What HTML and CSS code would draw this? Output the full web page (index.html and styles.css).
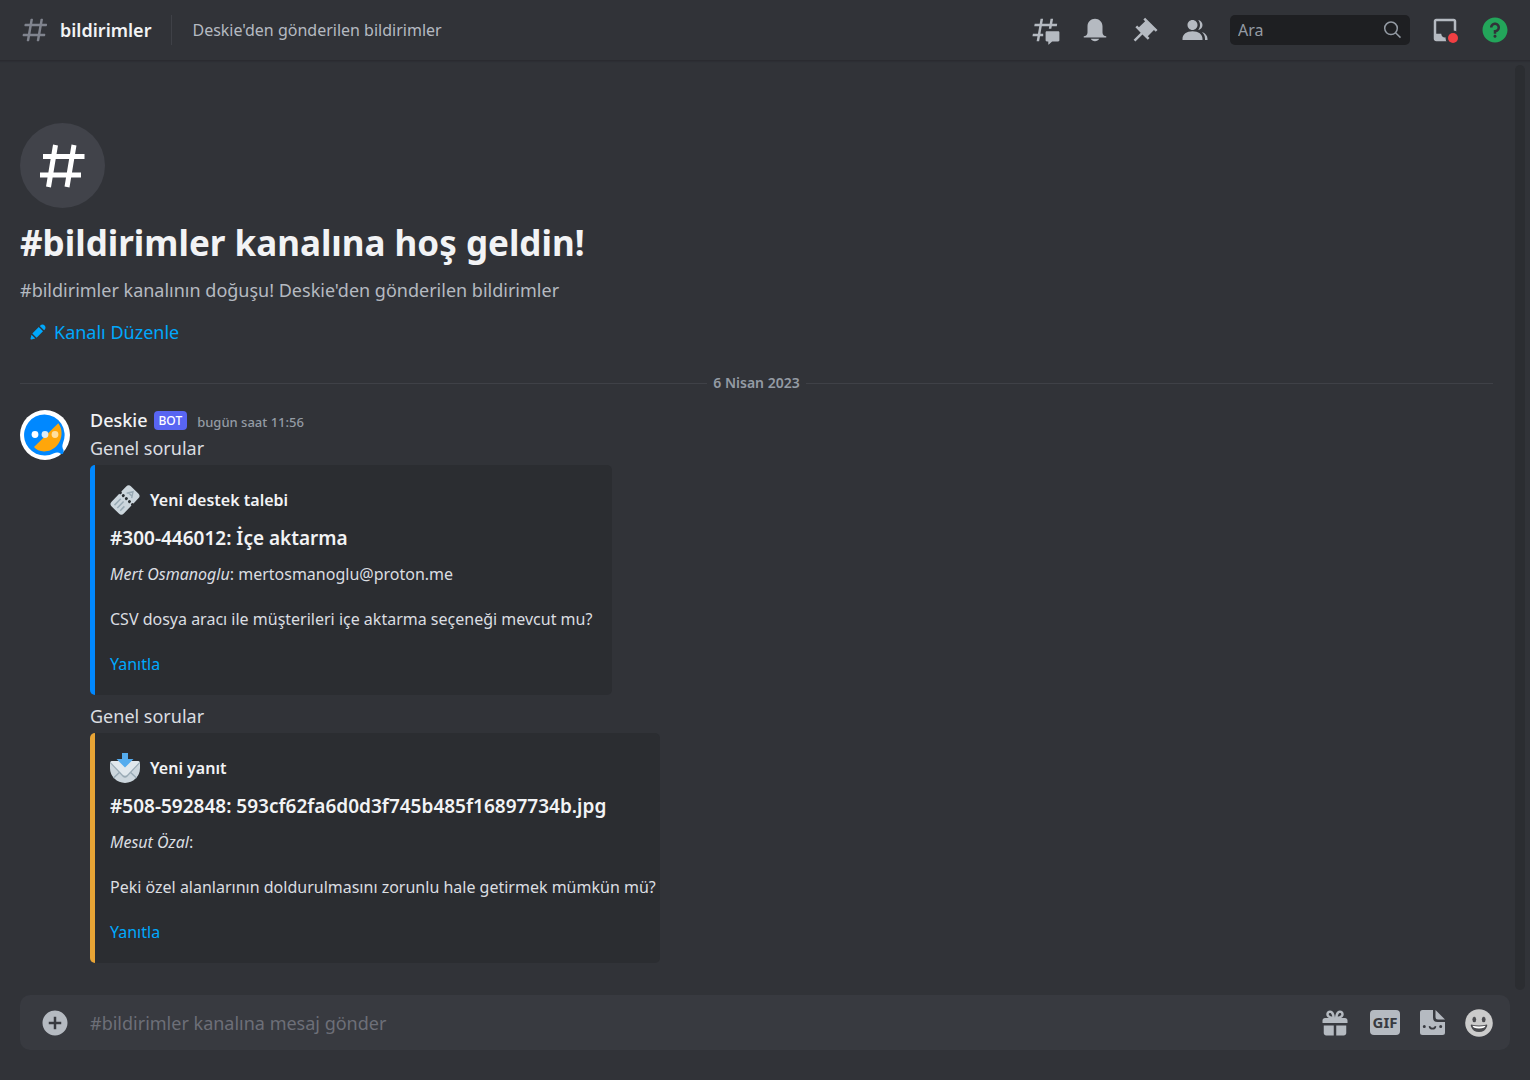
FILE: index.html
```html
<!DOCTYPE html>
<html lang="tr">
<head>
    <meta charset="UTF-8">
    <meta name="viewport" content="width=device-width, initial-scale=1">
    <title>bildirimler</title>
    <link rel="stylesheet" href="styles.css">
</head>
<body>
    <header class="topbar">
        <svg class="icon hash" viewBox="0 0 24 24"><path d="M5.887 21C5.575 21 5.34 20.719 5.394 20.413L6 17H2.595C2.284 17 2.049 16.72 2.103 16.414L2.278 15.414C2.319 15.175 2.527 15 2.77 15H6.35L7.41 9H4.005C3.694 9 3.459 8.72 3.513 8.414L3.688 7.414C3.729 7.175 3.937 7 4.18 7H7.76L8.397 3.413C8.439 3.174 8.647 3 8.889 3H9.873C10.185 3 10.42 3.281 10.366 3.587L9.76 7H15.76L16.397 3.413C16.439 3.174 16.647 3 16.889 3H17.873C18.185 3 18.42 3.281 18.366 3.587L17.76 7H21.165C21.476 7 21.711 7.28 21.657 7.586L21.482 8.586C21.441 8.825 21.233 9 20.99 9H17.41L16.35 15H19.755C20.066 15 20.301 15.28 20.247 15.586L20.072 16.586C20.031 16.825 19.823 17 19.58 17H16L15.363 20.587C15.321 20.826 15.113 21 14.871 21H13.887C13.575 21 13.34 20.719 13.394 20.413L14 17H8L7.363 20.587C7.321 20.826 7.113 21 6.871 21H5.887ZM9.41 9L8.35 15H14.35L15.41 9H9.41Z" fill-rule="evenodd"/></svg>
        <h1 class="channel-name">bildirimler</h1>
        <div class="topic">Deskie'den gönderilen bildirimler</div>
        <div class="toolbar">
            <button type="button" aria-label="Alt Başlıklar">
                <svg class="icon" viewBox="0 0 24 24"><path d="M5.433 21C5.358 21 5.302 20.932 5.315 20.859L6 17H2.143C2.068 17 2.012 16.933 2.025 16.859L2.333 15.099C2.343 15.042 2.392 15 2.451 15H6.35L7.41 9H3.553C3.478 9 3.422 8.933 3.435 8.859L3.743 7.099C3.753 7.042 3.802 7 3.861 7H7.76L8.452 3.099C8.463 3.042 8.512 3 8.57 3H10.327C10.401 3 10.458 3.067 10.445 3.141L9.76 7H15.76L16.452 3.099C16.463 3.042 16.512 3 16.57 3H18.327C18.401 3 18.458 3.067 18.445 3.141L17.76 7H21.617C21.692 7 21.748 7.067 21.735 7.141L21.427 8.901C21.417 8.958 21.367 9 21.309 9H17.41L17.05 11.04H15.05L15.41 9H9.41L8.35 15H10.56V17H8L7.307 20.901C7.297 20.958 7.248 21 7.189 21H5.433Z"/><path d="M13.44 12.96C12.91 12.96 12.48 13.39 12.48 13.92V20.221C12.48 20.752 12.91 21.181 13.44 21.181H14.4C14.533 21.181 14.64 21.289 14.64 21.421V23.46C14.64 23.668 14.887 23.777 15.041 23.638L17.486 21.429C17.662 21.27 17.892 21.181 18.129 21.181H22.56C23.09 21.181 23.52 20.752 23.52 20.221V13.92C23.52 13.39 23.09 12.96 22.56 12.96H13.44Z"/></svg>
            </button>
            <button type="button" aria-label="Bildirim Ayarları">
                <svg class="icon" viewBox="0 0 24 24"><path d="M18 9V14C18 15.657 19.344 17 21 17V18H3V17C4.656 17 6 15.657 6 14V9C6 5.686 8.686 3 12 3C15.314 3 18 5.686 18 9ZM12 21C10.524 21 9.248 20.19 8.555 19H15.445C14.752 20.19 13.476 21 12 21Z"/></svg>
            </button>
            <button type="button" aria-label="Sabitlenmiş Mesajlar">
                <svg class="icon" viewBox="0 0 24 24"><path d="M22 12L12.101 2.101L10.686 3.514L12.101 4.929L7.151 9.88L5.736 8.465L4.322 9.88L8.565 14.122L2.908 19.778L4.322 21.192L9.979 15.536L14.222 19.778L15.636 18.364L14.222 16.95L19.172 12L20.586 13.414L22 12Z"/></svg>
            </button>
            <button type="button" aria-label="Üye Listesi">
                <svg class="icon" viewBox="0 0 24 24"><path d="M14 8.006C14 10.211 12.206 12.006 10 12.006C7.795 12.006 6 10.211 6 8.006C6 5.801 7.794 4.006 10 4.006C12.206 4.006 14 5.801 14 8.006ZM2 19.006C2 15.473 5.29 13.006 10 13.006C14.711 13.006 18 15.473 18 19.006V20.006H2V19.006Z"/><path d="M20 20.006H22V19.006C22 16.443 20.27 14.442 17.521 13.535C19.062 14.913 20 16.806 20 19.006V20.006Z"/><path d="M14.883 11.908C16.666 11.504 18 9.908 18 8.006C18 5.969 16.469 4.282 14.497 4.037C15.432 5.095 16 6.485 16 8.006C16 9.449 15.489 10.774 14.638 11.81C14.72 11.842 14.802 11.874 14.883 11.908Z"/></svg>
            </button>
            <label class="search">
                <input type="text" placeholder="Ara" aria-label="Ara">
                <svg viewBox="0 0 20 20"><circle cx="9" cy="8.3" r="6.3"/><path d="M13.5 12.8L18.5 17.6"/></svg>
            </label>
            <button type="button" aria-label="Gelen Kutusu">
                <svg class="icon" viewBox="0 0 24 24">
                    <mask id="badge-cut"><rect width="24" height="24" fill="#fff"/><circle cx="18.4" cy="18.4" r="6" fill="#000"/></mask>
                    <path mask="url(#badge-cut)" d="M19 3H4.99C3.88 3 3.01 3.89 3.01 5L3 19C3 20.1 3.88 21 4.99 21H19C20.1 21 21 20.1 21 19V5C21 3.89 20.1 3 19 3ZM19 15H15C15 16.66 13.65 18 12 18C10.35 18 9 16.66 9 15H4.99V5H19V15Z"/>
                    <circle class="badge" cx="18.4" cy="18.4" r="4"/>
                </svg>
            </button>
            <button type="button" class="help" aria-label="Yardım">
                <svg class="icon" viewBox="0 0 24 24"><path d="M12 2C6.486 2 2 6.487 2 12C2 17.515 6.486 22 12 22C17.514 22 22 17.515 22 12C22 6.487 17.514 2 12 2ZM12 18.25C11.31 18.25 10.75 17.691 10.75 17C10.75 16.31 11.31 15.75 12 15.75C12.69 15.75 13.25 16.31 13.25 17C13.25 17.691 12.69 18.25 12 18.25ZM13 13.875V15H11V12H12C13.104 12 14 11.103 14 10C14 8.896 13.104 8 12 8C10.896 8 10 8.896 10 10H8C8 7.795 9.795 6 12 6C14.205 6 16 7.795 16 10C16 11.861 14.723 13.429 13 13.875Z"/></svg>
            </button>
        </div>
    </header>

    <main class="chat">
        <div class="messages">
            <section class="welcome">
                <div class="welcome-icon">
                    <svg viewBox="0 0 46 44"><path d="M15.500 1L8.500 43M34 1L27 43M3 12.500H44.500M0 31H41"/></svg>
                </div>
                <h2>#bildirimler kanalına hoş geldin!</h2>
                <p>#bildirimler kanalının doğuşu! Deskie'den gönderilen bildirimler</p>
                <button type="button" class="edit">
                    <svg viewBox="0 0 24 24"><path d="M19.293 9.83L19.941 9.183C21.353 7.771 21.353 5.472 19.941 4.059C18.529 2.647 16.229 2.647 14.817 4.059L14.17 4.707L19.293 9.83ZM12.896 5.977L5.185 13.691L10.309 18.813L18.02 11.099L12.896 5.977ZM4.119 20.97L8.759 19.811L4.187 15.239L3.027 19.88C2.95 20.186 3.04 20.511 3.263 20.734C3.487 20.957 3.812 21.046 4.119 20.97Z"/></svg>
                    Kanalı Düzenle
                </button>
            </section>

            <div class="divider"><span>6 Nisan 2023</span></div>

            <article class="message">
                <svg class="avatar" viewBox="0 0 50 50">
                    <circle cx="25" cy="25" r="25" fill="#fff"/>
                    <path d="M24.5 4.5A20.5 20.5 0 1 0 34 43.2Q38 41.5 41 44Q44 44.5 43.5 40Q41.5 37 43 33A20.5 20.5 0 0 0 24.5 4.5Z" fill="#0088ff"/>
                    <path d="M38.3 13.3C45 22 41 36 31 40C24 43 17 41 14 37Z" fill="#ffa60a"/>
                    <circle cx="15" cy="24.5" r="3.4" fill="#fff"/>
                    <circle cx="25" cy="24.5" r="3.4" fill="#dcebf5"/>
                    <circle cx="35" cy="24.5" r="3.4" fill="#ffdf9f"/>
                </svg>
                <div class="message-body">
                    <div class="message-head">
                        <span class="author">Deskie</span>
                        <span class="bot">BOT</span>
                        <time>bugün saat 11:56</time>
                    </div>
                    <p class="text">Genel sorular</p>
                    <div class="embed blue">
                        <div class="embed-author">
                            <svg viewBox="0 0 30 30">
                                <g transform="rotate(-46 15 15)">
                                    <path d="M4.500 6.500H15.500A1.500 1.500 0 0 0 18.500 6.500H25.500A3.500 3.500 0 0 1 29 10V20A3.500 3.500 0 0 1 25.500 23.500H18.500A1.500 1.500 0 0 0 15.500 23.500H4.500A3.500 3.500 0 0 1 1 20V10A3.500 3.500 0 0 1 4.500 6.500Z" fill="#ccd6dd"/>
                                    <path d="M4 11H13M4 15H13M4 19H10" stroke="#99aab5" stroke-width="1.5"/>
                                    <g fill="#292f33"><circle cx="17" cy="10.700" r="1.500"/><circle cx="17" cy="15" r="1.500"/><circle cx="17" cy="19.300" r="1.500"/></g>
                                    <path d="M21 11.500L26.500 15L21 18.500M22.500 12.500V17.500" fill="none" stroke="#99aab5" stroke-width="1.400"/>
                                </g>
                            </svg>
                            Yeni destek talebi
                        </div>
                        <h3>#300-446012: İçe aktarma</h3>
                        <div class="embed-text">
                            <p><em>Mert Osmanoglu</em>: mertosmanoglu@proton.me</p>
                            <p>CSV dosya aracı ile müşterileri içe aktarma seçeneği mevcut mu?</p>
                            <p><a href="#">Yanıtla</a></p>
                        </div>
                    </div>
                    <p class="text">Genel sorular</p>
                    <div class="embed orange">
                        <div class="embed-author">
                            <svg viewBox="0 0 30 30">
                                <path d="M2.5 8H27.5Q30 8 30 11V15A15 15 0 0 1 0 15V11Q0 8 2.5 8Z" fill="#ccd6dd"/>
                                <path d="M3.5 25L11 18M26.5 25L19 18" stroke="#99aab5" stroke-width="1.4"/>
                                <path d="M2.5 8H27.5Q29.5 8 30 10L17.5 23.5Q15 26 12.5 23.5L0 10Q.5 8 2.5 8Z" fill="#99aab5"/>
                                <path d="M2.5 8H27.5Q29 8 29.5 9L17.5 21.5Q15 24 12.5 21.5L.5 9Q1 8 2.5 8Z" fill="#e1e8ed"/>
                                <path d="M12 0H18V6H23.5L15 14.5L6.5 6H12Z" fill="#55acee"/>
                            </svg>
                            Yeni yanıt
                        </div>
                        <h3>#508-592848: 593cf62fa6d0d3f745b485f16897734b.jpg</h3>
                        <div class="embed-text">
                            <p><em>Mesut Özal</em>:</p>
                            <p>Peki özel alanlarının doldurulmasını zorunlu hale getirmek mümkün mü?</p>
                            <p><a href="#">Yanıtla</a></p>
                        </div>
                    </div>
                </div>
            </article>
        </div>
        <div class="scrollbar"></div>
    </main>

    <form class="composer">
        <button type="button" aria-label="Dosya ekle">
            <svg class="icon" viewBox="0 0 24 24"><path d="M12 2C6.486 2 2 6.486 2 12C2 17.514 6.486 22 12 22C17.514 22 22 17.514 22 12C22 6.486 17.514 2 12 2ZM17 13H13V17H11V13H7V11H11V7H13V11H17V13Z"/></svg>
        </button>
        <input type="text" placeholder="#bildirimler kanalına mesaj gönder" aria-label="Mesaj">
        <button type="button" aria-label="Hediye gönder">
            <svg class="icon" viewBox="0 0 24 24"><path fill-rule="evenodd" d="M16.886 7.999H20C21.104 7.999 22 8.896 22 9.999V11.999H2V9.999C2 8.896 2.897 7.999 4 7.999H7.114C6.663 7.764 6.236 7.477 5.879 7.121C4.709 5.951 4.709 4.048 5.879 2.879C7.012 1.746 8.986 1.746 10.121 2.877C11.758 4.514 11.979 7.595 11.998 7.941L12 7.999L12.002 7.94C12.021 7.593 12.242 4.513 13.879 2.877C15.012 1.745 16.986 1.745 18.121 2.877C19.29 4.049 19.29 5.951 18.121 7.121C17.764 7.478 17.337 7.764 16.886 7.999ZM7.293 5.707C6.903 5.316 6.903 4.682 7.293 4.292C7.481 4.103 7.732 4 8 4C8.268 4 8.519 4.103 8.707 4.292C9.297 4.882 9.641 5.94 9.825 6.822C8.945 6.639 7.879 6.293 7.293 5.707ZM14.174 6.824C14.359 5.941 14.702 4.883 15.293 4.293C15.481 4.103 15.732 4 16 4C16.268 4 16.519 4.103 16.706 4.291C17.096 4.682 17.097 5.316 16.707 5.707C16.116 6.298 15.057 6.642 14.174 6.824ZM3 13.999H11V21.999H5C3.897 21.999 3 21.103 3 19.999V13.999ZM13 13.999V21.999H19C20.104 21.999 21 21.103 21 19.999V13.999H13Z"/></svg>
        </button>
        <button type="button" class="gif">GIF</button>
        <button type="button" aria-label="Çıkartma">
            <svg class="sticker" viewBox="0 0 25 25"><path fill-rule="evenodd" d="M2.5 0H13V7.5Q13 12 17.5 12H25V22.5Q25 25 22.5 25H2.5Q0 25 0 22.5V2.5Q0 0 2.5 0ZM4.3 15A1.5 1.5 0 1 0 4.3 18A1.5 1.5 0 1 0 4.3 15ZM20.7 15A1.5 1.5 0 1 0 20.7 18A1.5 1.5 0 1 0 20.7 15ZM8.7 16.2Q9 19.6 12.5 19.6Q16 19.6 16.3 16.2L14.8 16Q14.5 17.8 12.5 17.8Q10.5 17.8 10.2 16Z"/><path d="M15.5 0L25 9.5H18Q15.5 9.5 15.5 7Z"/></svg>
        </button>
        <button type="button" aria-label="Emoji">
            <svg class="emoji" viewBox="0 0 28 28"><circle cx="14" cy="14" r="13.8" fill="#cbcbcb"/><g fill="#4a4b4f"><ellipse cx="9.3" cy="10.5" rx="1.9" ry="2.7"/><ellipse cx="18.7" cy="10.5" rx="1.9" ry="2.7"/><path d="M6 15.5Q14 17.5 22 15.5Q22.5 16 22 17.5Q20 23 14 23Q8 23 6 17.5Q5.5 16 6 15.5Z"/></g><path d="M7.5 16.8Q14 18.3 20.5 16.8Q20 19.5 14 19.5Q8 19.5 7.5 16.8Z" fill="#fff"/></svg>
        </button>
    </form>
</body>
</html>
```
FILE: styles.css
```css
* {
    box-sizing: border-box;
}
body {
    margin: 0;
    min-height: 100vh;
    display: flex;
    flex-direction: column;
    background-color: #313338;
    color: #dbdee1;
    font-family: "Noto Sans", sans-serif;
    font-size: 18px;
}
h1, h2, h3, p {
    margin: 0;
}
button {
    display: flex;
    padding: 0;
    border: 0;
    background: none;
    color: #b5bac1;
    font: inherit;
    cursor: pointer;
}
input {
    min-width: 0;
    flex: 1;
    padding: 0;
    border: 0;
    outline: 0;
    background: none;
    color: #dbdee1;
    font: inherit;
}
a {
    color: #00a8fc;
    text-decoration: none;
}
svg {
    display: block;
    flex: none;
    fill: currentColor;
}
.icon {
    width: 30px;
    height: 30px;
}

/* top bar */
.topbar {
    display: flex;
    align-items: center;
    height: 60px;
    padding: 0 20px;
    box-shadow: 0 1px 1px #2a2b30, 0 2px 1px #2e3035;
}
.hash {
    color: #80848e;
}
.channel-name {
    margin-left: 10px;
    color: #f2f3f5;
    font-size: 18px;
    font-weight: 600;
}
.topic {
    flex: 1;
    margin-left: 20px;
    padding-left: 20px;
    border-left: 1px solid #3f4147;
    color: #b5bac1;
    font-size: 16px;
    line-height: 30px;
}
.toolbar {
    display: flex;
    align-items: center;
    gap: 20px;
}
.search {
    display: flex;
    align-items: center;
    width: 180px;
    height: 30px;
    padding: 0 8px;
    border-radius: 5px;
    background-color: #1e1f22;
    font-size: 16px;
}
.search svg {
    width: 20px;
    height: 20px;
    fill: none;
    stroke: #949ba4;
    stroke-width: 1.5;
}
.search input::placeholder {
    color: #949ba4;
    opacity: 1;
}
.badge {
    fill: #f23f43;
}
.help {
    color: #23a55a;
}

/* messages */
.chat {
    flex: 1;
    display: flex;
}
.messages {
    flex: 1;
    display: flex;
    flex-direction: column;
    justify-content: flex-end;
    padding: 20px 17px 32px 20px;
}
.scrollbar {
    width: 10px;
    margin: 5px;
    border-radius: 5px;
    background-color: #2b2d31;
}
.welcome-icon {
    display: flex;
    align-items: center;
    justify-content: center;
    width: 85px;
    height: 85px;
    border-radius: 50%;
    background-color: #41434a;
}
.welcome-icon svg {
    width: 46px;
    height: 44px;
    fill: none;
    stroke: #fff;
    stroke-width: 5;
}
.welcome h2 {
    margin-top: 10px;
    color: #f2f3f5;
    font-size: 35px;
    font-weight: 700;
    line-height: 50px;
}
.welcome p {
    margin-top: 9px;
    color: #b5bac1;
    line-height: 26px;
}
.edit {
    align-items: center;
    gap: 6px;
    height: 40px;
    margin: 9px 0 22px;
    padding: 0 8px;
    color: #00a8fc;
}
.edit svg {
    width: 20px;
    height: 20px;
}
.divider {
    display: flex;
    align-items: center;
    gap: 6px;
    color: #949ba4;
    font-size: 14px;
    font-weight: 600;
    line-height: 18px;
}
.divider::before, .divider::after {
    content: "";
    flex: 1;
    height: 1px;
    background-color: #3f4147;
}
.message {
    display: flex;
    gap: 20px;
    margin-top: 14px;
}
.avatar {
    width: 50px;
    height: 50px;
    margin-top: 4px;
}
.message-head {
    display: flex;
    align-items: baseline;
    height: 28px;
    line-height: 28px;
}
.author {
    color: #f2f3f5;
    font-weight: 500;
}
.bot {
    align-self: center;
    margin: 0 10px 0 6px;
    padding: 0 5px;
    border-radius: 4px;
    background-color: #5865f2;
    color: #fff;
    font-size: 12px;
    font-weight: 500;
    line-height: 19px;
}
.message-head time {
    color: #949ba4;
    font-size: 13px;
    font-weight: 500;
}
.text {
    line-height: 28px;
}
.embed {
    width: fit-content;
    max-width: 570px;
    margin: 3px 0 7px;
    padding: 20px 20px 20px 15px;
    border-left: 5px solid;
    border-radius: 5px;
    background-color: #2b2d31;
    white-space: nowrap;
}
.embed:last-child {
    margin-bottom: 0;
}
.embed.blue {
    border-color: #0088ff;
}
.embed.orange {
    border-color: #e8a435;
}
.embed-author {
    display: flex;
    align-items: center;
    gap: 10px;
    color: #f2f3f5;
    font-size: 16px;
    font-weight: 600;
    line-height: 30px;
}
.embed-author svg {
    width: 30px;
    height: 30px;
}
.embed h3 {
    margin: 10px 0 12px;
    color: #f2f3f5;
    font-size: 19px;
    font-weight: 600;
    line-height: 26px;
}
.embed-text {
    display: grid;
    gap: 23px;
    font-size: 16px;
    line-height: 22px;
}

/* message box */
.composer {
    display: flex;
    align-items: center;
    gap: 20px;
    min-height: 55px;
    margin: 0 20px 30px;
    padding: 0 17px 0 20px;
    border-radius: 10px;
    background-color: #383a40;
}
.composer input::placeholder {
    color: #6d6f78;
    opacity: 1;
}
.gif {
    justify-content: center;
    width: 30px;
    border-radius: 4px;
    background-color: #b5bac1;
    color: #383a40;
    font-size: 15px;
    font-weight: 700;
    line-height: 25px;
}
.sticker {
    width: 25px;
    height: 25px;
}
.emoji {
    width: 28px;
    height: 28px;
}
```
